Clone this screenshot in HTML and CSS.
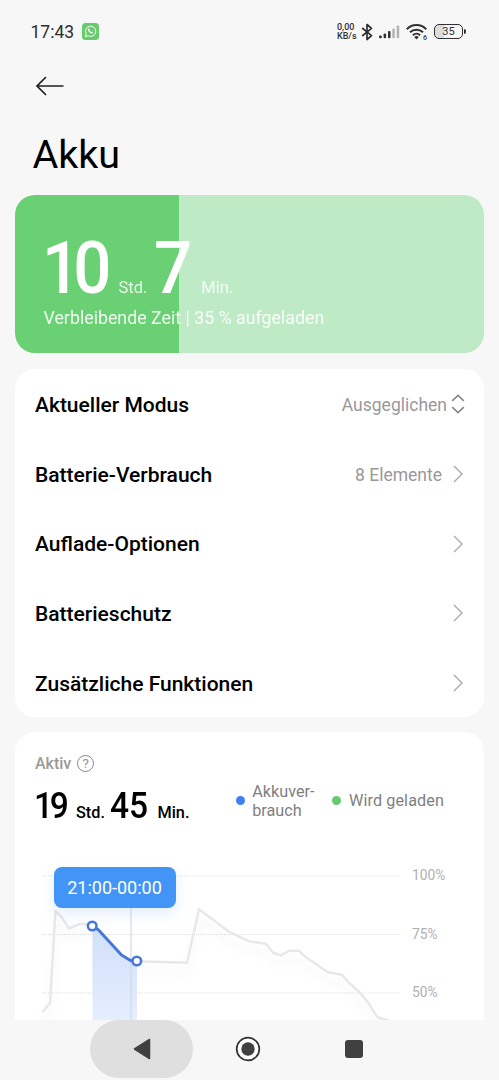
FILE: index.html
```html
<!DOCTYPE html>
<html lang="de">
<head>
    <meta charset="UTF-8">
    <meta name="viewport" content="width=device-width, initial-scale=1.0">
    <link rel="stylesheet" href="styles.css">
    <title>Akku</title>
</head>
<body>
    <div class="status-bar">
        <span class="clock">17:43</span>
        <svg class="whatsapp" width="17" height="17" viewBox="0 0 17 17">
            <rect width="17" height="17" rx="3.5" fill="#67cd6b"/>
            <path d="M3.4 13.6l.8-2.8a5.1 5.1 0 1 1 2 2z" fill="none" stroke="#fff" stroke-width="1" stroke-linejoin="round"/>
            <path d="M6.4 5.8c.5-.6 1-.4 1.2.2.3.7.2.9-.2 1.3.4.9.9 1.4 1.8 1.8.4-.5.6-.5 1.3-.1.6.3.5.6.2 1-1 1.3-4.8-.8-4.7-3 0-.5.1-.8.4-1.2z" fill="#fff"/>
        </svg>
        <div class="status-right">
            <div class="net-speed"><span>0,00</span><span>KB/s</span></div>
            <svg class="bluetooth" width="12" height="18" viewBox="0 0 12 18">
                <path d="M1.2 5l9.3 7.7L6 16.5v-15l4.5 3.8L1.2 13" fill="none" stroke="#303030" stroke-width="1.7" stroke-linejoin="round"/>
            </svg>
            <svg class="signal" width="21" height="14" viewBox="0 0 21 14">
                <g fill="#303030">
                    <rect x="0" y="10.5" width="2.8" height="2.8" rx="1"/>
                    <rect x="4.6" y="8.5" width="2.5" height="4.8" rx="1"/>
                    <rect x="9" y="6" width="2.5" height="7.3" rx="1"/>
                </g>
                <g fill="#b4b4b4">
                    <rect x="13.3" y="3.5" width="2.5" height="9.8" rx="1"/>
                    <rect x="17.7" y="0.5" width="2.5" height="12.8" rx="1"/>
                </g>
            </svg>
            <svg class="wifi" width="23" height="18" viewBox="0 0 23 18">
                <g fill="none" stroke="#303030" stroke-width="2">
                    <path d="M.8 6.2a13.5 13.5 0 0 1 19.4 0"/>
                    <path d="M4 9.3a9.3 9.3 0 0 1 13 0"/>
                    <path d="M6.9 12.2a5.2 5.2 0 0 1 7.2 0"/>
                </g>
                <path d="M8.2 14a3.3 3.3 0 0 1 4.6 0l-2.3 2.5z" fill="#303030"/>
                <text x="17" y="17" class="wifi-gen">6</text>
            </svg>
            <div class="battery">35</div>
            <div class="battery-tip"></div>
        </div>
    </div>

    <div class="back-bar">
        <svg width="30" height="22" viewBox="0 0 30 22">
            <path d="M11 2L2 11l9 9M2 11h26.5" fill="none" stroke="#222" stroke-width="1.7"/>
        </svg>
    </div>

    <h1>Akku</h1>

    <div class="charge-card">
        <div class="charge-time">
            <span class="big ten">10</span>
            <span class="unit">Std.</span>
            <span class="big seven">7</span>
            <span class="unit">Min.</span>
        </div>
        <div class="charge-info">Verbleibende Zeit | 35 % aufgeladen</div>
    </div>

    <div class="card menu">
        <div class="row">
            <span>Aktueller Modus</span>
            <span class="value mode">Ausgeglichen</span>
            <svg width="14" height="20" viewBox="0 0 14 20"><path d="M1.2 6.8L7 1.3l5.8 5.5M1.2 13.2l5.8 5.5 5.8-5.5" stroke="#888" stroke-width="1.6"/></svg>
        </div>
        <div class="row">
            <span>Batterie-Verbrauch</span>
            <span class="value">8 Elemente</span>
            <svg width="12" height="18" viewBox="0 0 12 18"><path d="M2 1l8 8-8 8"/></svg>
        </div>
        <div class="row">
            <span>Auflade-Optionen</span>
            <svg width="12" height="18" viewBox="0 0 12 18"><path d="M2 1l8 8-8 8"/></svg>
        </div>
        <div class="row">
            <span>Batterieschutz</span>
            <svg width="12" height="18" viewBox="0 0 12 18"><path d="M2 1l8 8-8 8"/></svg>
        </div>
        <div class="row">
            <span>Zusätzliche Funktionen</span>
            <svg width="12" height="18" viewBox="0 0 12 18"><path d="M2 1l8 8-8 8"/></svg>
        </div>
    </div>

    <div class="card usage">
        <div class="active-label">
            Aktiv
            <span class="help">?</span>
        </div>
        <div class="summary">
            <div class="active-time">
                <span class="num">19</span>
                <span class="small">Std.</span>
                <span class="num second">45</span>
                <span class="small">Min.</span>
            </div>
            <div class="legend">
                <span class="dot blue"></span>
                <span class="legend-usage">Akkuver-<br>brauch</span>
                <span class="dot green"></span>
                <span>Wird geladen</span>
            </div>
        </div>
        <div class="chart">
            <svg width="469" height="170" viewBox="15 850 469 170">
                <defs>
                    <linearGradient id="fill" x1="0" y1="0" x2="0" y2="1">
                        <stop offset="0" stop-color="#d0dffa"/>
                        <stop offset="1" stop-color="#e6eefd"/>
                    </linearGradient>
                    <filter id="shadow" x="-10%" y="-10%" width="120%" height="140%">
                        <feDropShadow dx="0" dy="9" stdDeviation="4" flood-color="#000" flood-opacity="0.05"/>
                    </filter>
                </defs>
                <g class="grid">
                    <path d="M42 876h357"/>
                    <path d="M42 934.5h357"/>
                    <path d="M42 993h357"/>
                </g>
                <g class="line" filter="url(#shadow)">
                    <path d="M42.5 1012l7.5-9 5.5-92 6 6 7.5 11.5 10.5-4.5h13"/>
                    <path d="M137 961.3l50 1.5 12-53.5 14 10.5 16 12 20 9.5 17 2.5 7 9 8.5 2.5 7.5-4.5h10l7 6.5 22 15 14 2.5 8 9 9 8 9 10.5 9.5 15 15 4.5"/>
                </g>
                <path d="M92.5 926l30 32 14.5 3v59h-44.5z" fill="url(#fill)"/>
                <path d="M131 907v113" stroke="#ccd5e5" stroke-width="1"/>
                <path d="M92.5 926l6 4 23 25 9 5.5 6 .5" class="active-line"/>
                <circle cx="92.2" cy="926" r="4.3" class="knob"/>
                <circle cx="136.8" cy="961" r="4.3" class="knob"/>
                <g class="axis">
                    <text x="412" y="880">100%</text>
                    <text x="412" y="938.5">75%</text>
                    <text x="412" y="997">50%</text>
                </g>
            </svg>
            <div class="tooltip">21:00-00:00</div>
        </div>
    </div>

    <div class="nav-bar">
        <div class="nav-back">
            <svg width="18" height="22" viewBox="0 0 18 22"><path d="M1.5 11L16.5 1.5v19z" fill="#404040" stroke="#404040" stroke-width="1.5" stroke-linejoin="round"/></svg>
        </div>
        <svg class="nav-home" width="26" height="26" viewBox="0 0 26 26">
            <circle cx="13" cy="13" r="11.3" fill="#fff" stroke="#303030" stroke-width="1.7"/>
            <circle cx="13" cy="13" r="6.7" fill="#404040"/>
        </svg>
        <div class="nav-recent"></div>
    </div>
</body>
</html>
```
FILE: styles.css
```css
* {
    box-sizing: border-box;
}

body {
    margin: 0;
    height: 1080px;
    overflow: hidden;
    display: flex;
    flex-direction: column;
    background-color: #f7f7f7;
    font-family: Roboto, sans-serif;
    color: #000;
}

svg {
    display: block;
    flex: none;
}

.status-bar {
    display: flex;
    align-items: center;
    height: 64px;
    padding-left: 30.5px;
    padding-right: 33px;
}

.clock {
    width: 51.5px;
    padding-top: 1px;
    font-size: 17.5px;
    color: #303030;
}

.status-right {
    display: flex;
    align-items: center;
    margin-left: auto;
}

.net-speed {
    display: flex;
    flex-direction: column;
    width: 24px;
    font-size: 9px;
    font-weight: 500;
    line-height: 9px;
    color: #303030;
    white-space: nowrap;
}

.bluetooth {
    margin-right: 6px;
}

.signal {
    margin-right: 6px;
}

.wifi {
    margin-right: 5px;
}

.wifi-gen {
    font-size: 7px;
    font-weight: 500;
    fill: #303030;
}

.battery {
    width: 29px;
    height: 15px;
    border: 1.5px solid #303030;
    border-radius: 5px;
    background: linear-gradient(to right, #dcdcdc 35%, transparent 35%);
    font-size: 11px;
    line-height: 14px;
    text-align: center;
    color: #303030;
}

.battery-tip {
    width: 2px;
    height: 5px;
    margin-left: 1px;
    border-radius: 0 2px 2px 0;
    background-color: #303030;
}

.back-bar {
    padding: 11px 0 0 35px;
    height: 66px;
}

h1 {
    margin: 0;
    height: 65.5px;
    padding-left: 32.5px;
    font-size: 39.5px;
    font-weight: 400;
    line-height: 49px;
    letter-spacing: 0;
}

.charge-card {
    flex: none;
    height: 158px;
    margin: 0 15px;
    padding: 38px 28.5px 0;
    border-radius: 20px;
    background: linear-gradient(to right, #69d073 35%, #beebc6 35%);
    color: #fff;
}

.charge-time {
    display: flex;
    align-items: baseline;
    height: 71px;
    line-height: 71px;
}

.big {
    font-size: 73px;
    font-weight: 500;
    transform: scaleX(0.92);
    transform-origin: left;
}

.ten {
    width: 77px;
    margin-left: -2px;
    letter-spacing: -7.5px;
}

.seven {
    width: 46px;
    margin-left: 7px;
}

.unit {
    font-size: 16.5px;
    opacity: 0.85;
}

.seven + .unit {
    margin-left: 1px;
}

.charge-info {
    font-size: 17.8px;
    line-height: 28px;
    opacity: 0.9;
}

.card {
    flex: none;
    margin: 15.5px 15px 0;
    border-radius: 20px;
    background-color: #fff;
}

.menu {
    height: 348px;
    padding: 1px 20px 0;
}

.row {
    display: flex;
    align-items: center;
    height: 69.7px;
    font-size: 21px;
    font-weight: 500;
}

.row span {
    padding-top: 1px;
}

.row svg {
    margin-left: auto;
    fill: none;
    stroke: #aaa;
    stroke-width: 1.4;
}

.value {
    margin-left: auto;
    font-size: 17.5px;
    font-weight: 400;
    color: #999;
}

.row .value + svg {
    margin-left: 10px;
}

.row .mode + svg {
    margin-left: 4px;
    margin-right: -1px;
}

.usage {
    height: 288px;
    border-radius: 20px 20px 0 0;
}

.active-label {
    display: flex;
    align-items: center;
    gap: 6px;
    height: 52px;
    padding: 11px 20px 0;
    font-size: 16px;
    font-weight: 500;
    color: #999;
}

.help {
    width: 17px;
    height: 17px;
    border: 1.3px solid #888;
    border-radius: 50%;
    font-size: 13.5px;
    font-weight: 400;
    line-height: 15.5px;
    text-align: center;
}

.summary {
    display: flex;
    justify-content: space-between;
    height: 66px;
    padding: 0 40px 0 20px;
}

.active-time {
    display: flex;
    align-items: baseline;
    line-height: 44px;
    white-space: nowrap;
}

.num {
    width: 42px;
    margin-left: -1px;
    font-size: 36.5px;
    font-weight: 500;
    letter-spacing: -3.5px;
    transform: scaleX(0.92);
    transform-origin: left;
}

.second {
    width: 47px;
    margin-left: 5.5px;
    letter-spacing: 0;
}

.small {
    font-size: 16.3px;
    font-weight: 500;
}

.legend {
    display: flex;
    align-items: center;
    height: 33px;
    font-size: 16.2px;
    line-height: 19px;
    color: #808080;
}

.dot {
    width: 9px;
    height: 9px;
    margin-right: 7.5px;
    border-radius: 50%;
}

.legend-usage {
    margin-right: 18px;
}

.legend span:last-child {
    letter-spacing: 0.1px;
}

.blue {
    margin-right: 7px;
    background-color: #4080ee;
}

.green {
    background-color: #65cb72;
}

.chart {
    position: relative;
    height: 170px;
}

.grid path {
    stroke: #dedede;
    stroke-width: 1;
    stroke-dasharray: 1 1;
}

.line path {
    fill: none;
    stroke: #e8e8e8;
    stroke-width: 2.5;
    stroke-linejoin: round;
}

.active-line {
    fill: none;
    stroke: #4677dc;
    stroke-width: 3;
    stroke-linejoin: round;
}

.knob {
    fill: #fff;
    stroke: #4677dc;
    stroke-width: 2.5;
}

.axis text {
    font-size: 13.8px;
    fill: #b0b0b0;
}

/* selected time span above the curve */
.tooltip {
    position: absolute;
    left: 38.5px;
    top: 17px;
    width: 122px;
    height: 41px;
    border-radius: 8px;
    background-color: #4295f6;
    box-shadow: 0 6px 14px rgba(66, 149, 246, 0.15);
    color: #fff;
    font-size: 18px;
    line-height: 41px;
    text-align: center;
}

.nav-bar {
    display: flex;
    align-items: center;
    height: 60px;
    padding: 0 0 2px 90px;
    background-color: #f7f7f7;
    z-index: 1;
}

.nav-back {
    display: flex;
    align-items: center;
    justify-content: center;
    width: 103px;
    height: 58px;
    border-radius: 29px;
    background-color: #dfdfdf;
}

.nav-home {
    margin-left: 42px;
}

.nav-recent {
    width: 18px;
    height: 18px;
    margin-left: 84px;
    border-radius: 3px;
    background-color: #404040;
}
```
